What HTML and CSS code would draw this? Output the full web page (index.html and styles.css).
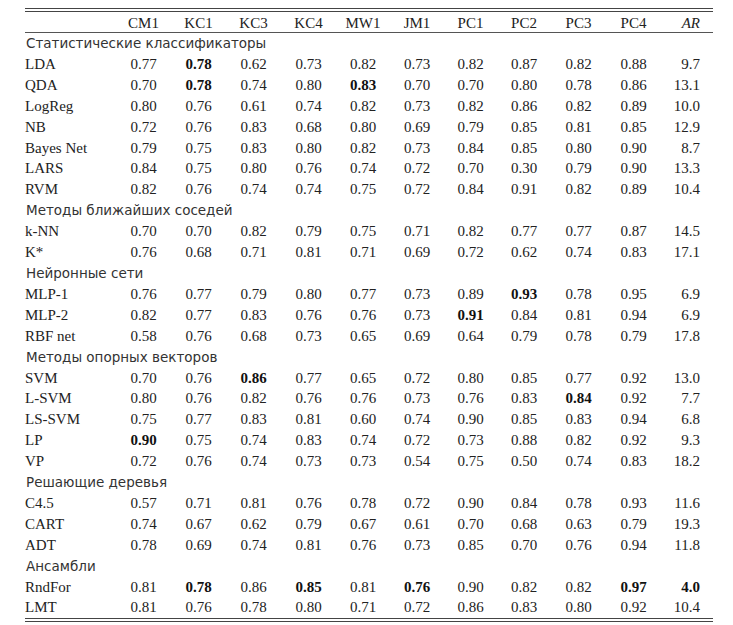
FILE: index.html
```html
<!DOCTYPE html>
<html lang="ru">
<head>
    <meta charset="UTF-8">
    <meta name="viewport" content="width=device-width, initial-scale=1.0">
    <title>AUC классификаторов</title>
    <link rel="stylesheet" href="styles.css">
</head>
<body>

    <div class="results">
        <table class="results-table">
            <colgroup>
                <col class="col-name">
                <col style="width:55px"><col style="width:55px"><col style="width:55px"><col style="width:55px">
                <col style="width:54px"><col style="width:54px"><col style="width:53px"><col style="width:54px">
                <col style="width:55px"><col style="width:55px"><col style="width:52px">
            </colgroup>
            <thead>
                <tr>
                    <th></th>
                    <th>CM1</th><th>KC1</th><th>KC3</th><th>KC4</th><th>MW1</th>
                    <th>JM1</th><th>PC1</th><th>PC2</th><th>PC3</th><th>PC4</th>
                    <th class="rank"><i>AR</i></th>
                </tr>
            </thead>
            <tbody>
                <!-- Статистические -->
                <tr class="group"><td colspan="12">Статистические классификаторы</td></tr>
                <tr><td>LDA</td><td>0.77</td><td><b>0.78</b></td><td>0.62</td><td>0.73</td><td>0.82</td><td>0.73</td><td>0.82</td><td>0.87</td><td>0.82</td><td>0.88</td><td class="rank">9.7</td></tr>
                <tr><td>QDA</td><td>0.70</td><td><b>0.78</b></td><td>0.74</td><td>0.80</td><td><b>0.83</b></td><td>0.70</td><td>0.70</td><td>0.80</td><td>0.78</td><td>0.86</td><td class="rank">13.1</td></tr>
                <tr><td>LogReg</td><td>0.80</td><td>0.76</td><td>0.61</td><td>0.74</td><td>0.82</td><td>0.73</td><td>0.82</td><td>0.86</td><td>0.82</td><td>0.89</td><td class="rank">10.0</td></tr>
                <tr><td>NB</td><td>0.72</td><td>0.76</td><td>0.83</td><td>0.68</td><td>0.80</td><td>0.69</td><td>0.79</td><td>0.85</td><td>0.81</td><td>0.85</td><td class="rank">12.9</td></tr>
                <tr><td>Bayes Net</td><td>0.79</td><td>0.75</td><td>0.83</td><td>0.80</td><td>0.82</td><td>0.73</td><td>0.84</td><td>0.85</td><td>0.80</td><td>0.90</td><td class="rank">8.7</td></tr>
                <tr><td>LARS</td><td>0.84</td><td>0.75</td><td>0.80</td><td>0.76</td><td>0.74</td><td>0.72</td><td>0.70</td><td>0.30</td><td>0.79</td><td>0.90</td><td class="rank">13.3</td></tr>
                <tr><td>RVM</td><td>0.82</td><td>0.76</td><td>0.74</td><td>0.74</td><td>0.75</td><td>0.72</td><td>0.84</td><td>0.91</td><td>0.82</td><td>0.89</td><td class="rank">10.4</td></tr>

                <!-- Ближайшие соседи -->
                <tr class="group"><td colspan="12">Методы ближайших соседей</td></tr>
                <tr><td>k-NN</td><td>0.70</td><td>0.70</td><td>0.82</td><td>0.79</td><td>0.75</td><td>0.71</td><td>0.82</td><td>0.77</td><td>0.77</td><td>0.87</td><td class="rank">14.5</td></tr>
                <tr><td>K*</td><td>0.76</td><td>0.68</td><td>0.71</td><td>0.81</td><td>0.71</td><td>0.69</td><td>0.72</td><td>0.62</td><td>0.74</td><td>0.83</td><td class="rank">17.1</td></tr>

                <!-- Нейронные сети -->
                <tr class="group"><td colspan="12">Нейронные сети</td></tr>
                <tr><td>MLP-1</td><td>0.76</td><td>0.77</td><td>0.79</td><td>0.80</td><td>0.77</td><td>0.73</td><td>0.89</td><td><b>0.93</b></td><td>0.78</td><td>0.95</td><td class="rank">6.9</td></tr>
                <tr><td>MLP-2</td><td>0.82</td><td>0.77</td><td>0.83</td><td>0.76</td><td>0.76</td><td>0.73</td><td><b>0.91</b></td><td>0.84</td><td>0.81</td><td>0.94</td><td class="rank">6.9</td></tr>
                <tr><td>RBF net</td><td>0.58</td><td>0.76</td><td>0.68</td><td>0.73</td><td>0.65</td><td>0.69</td><td>0.64</td><td>0.79</td><td>0.78</td><td>0.79</td><td class="rank">17.8</td></tr>

                <!-- Опорные векторы -->
                <tr class="group"><td colspan="12">Методы опорных векторов</td></tr>
                <tr><td>SVM</td><td>0.70</td><td>0.76</td><td><b>0.86</b></td><td>0.77</td><td>0.65</td><td>0.72</td><td>0.80</td><td>0.85</td><td>0.77</td><td>0.92</td><td class="rank">13.0</td></tr>
                <tr><td>L-SVM</td><td>0.80</td><td>0.76</td><td>0.82</td><td>0.76</td><td>0.76</td><td>0.73</td><td>0.76</td><td>0.83</td><td><b>0.84</b></td><td>0.92</td><td class="rank">7.7</td></tr>
                <tr><td>LS-SVM</td><td>0.75</td><td>0.77</td><td>0.83</td><td>0.81</td><td>0.60</td><td>0.74</td><td>0.90</td><td>0.85</td><td>0.83</td><td>0.94</td><td class="rank">6.8</td></tr>
                <tr><td>LP</td><td><b>0.90</b></td><td>0.75</td><td>0.74</td><td>0.83</td><td>0.74</td><td>0.72</td><td>0.73</td><td>0.88</td><td>0.82</td><td>0.92</td><td class="rank">9.3</td></tr>
                <tr><td>VP</td><td>0.72</td><td>0.76</td><td>0.74</td><td>0.73</td><td>0.73</td><td>0.54</td><td>0.75</td><td>0.50</td><td>0.74</td><td>0.83</td><td class="rank">18.2</td></tr>

                <!-- Деревья -->
                <tr class="group"><td colspan="12">Решающие деревья</td></tr>
                <tr><td>C4.5</td><td>0.57</td><td>0.71</td><td>0.81</td><td>0.76</td><td>0.78</td><td>0.72</td><td>0.90</td><td>0.84</td><td>0.78</td><td>0.93</td><td class="rank">11.6</td></tr>
                <tr><td>CART</td><td>0.74</td><td>0.67</td><td>0.62</td><td>0.79</td><td>0.67</td><td>0.61</td><td>0.70</td><td>0.68</td><td>0.63</td><td>0.79</td><td class="rank">19.3</td></tr>
                <tr><td>ADT</td><td>0.78</td><td>0.69</td><td>0.74</td><td>0.81</td><td>0.76</td><td>0.73</td><td>0.85</td><td>0.70</td><td>0.76</td><td>0.94</td><td class="rank">11.8</td></tr>

                <!-- Ансамбли -->
                <tr class="group"><td colspan="12">Ансамбли</td></tr>
                <tr><td>RndFor</td><td>0.81</td><td><b>0.78</b></td><td>0.86</td><td><b>0.85</b></td><td>0.81</td><td><b>0.76</b></td><td>0.90</td><td>0.82</td><td>0.82</td><td><b>0.97</b></td><td class="rank"><b>4.0</b></td></tr>
                <tr><td>LMT</td><td>0.81</td><td>0.76</td><td>0.78</td><td>0.80</td><td>0.71</td><td>0.72</td><td>0.86</td><td>0.83</td><td>0.80</td><td>0.92</td><td class="rank">10.4</td></tr>
            </tbody>
        </table>
    </div>

</body>
</html>
```

FILE: styles.css
```css
/* Page */
body, html {
    margin: 0;
    padding: 0;
    background-color: #ffffff;
    color: #222;
}

/* Double rule above and below the table */
.results {
    width: 688px;
    margin: 8px 0 0 25px;
    padding: 2px 0;
    border-top: 1px solid #444;
    border-bottom: 1px solid #444;
}

.results-table {
    width: 100%;
    table-layout: fixed;
    border-collapse: collapse;
    border-top: 1px solid #444;
    border-bottom: 1px solid #444;
    font-family: "Liberation Serif", "Times New Roman", serif;
    font-size: 15px;
}

.col-name {
    width: 91px;
}

/* Header */
.results-table th {
    font-weight: normal;
    text-align: center;
    padding: 3px 0 0;
    line-height: 17px;
    border-bottom: 1px solid #555;
}

/* Body cells */
.results-table td {
    text-align: center;
    padding: 1px 0 0;
    line-height: 19.9px;
    white-space: nowrap;
}
.results-table td:first-child {
    text-align: left;
}
.results-table .rank {
    text-align: right;
    padding-right: 13px;
}

.results-table b {
    color: #111;
}

/* Section headings inside the table */
.results-table .group td {
    font-family: "DejaVu Sans", "Noto Sans", sans-serif;
    font-size: 13.5px;
    color: #333;
    padding-left: 1px;
}
```
